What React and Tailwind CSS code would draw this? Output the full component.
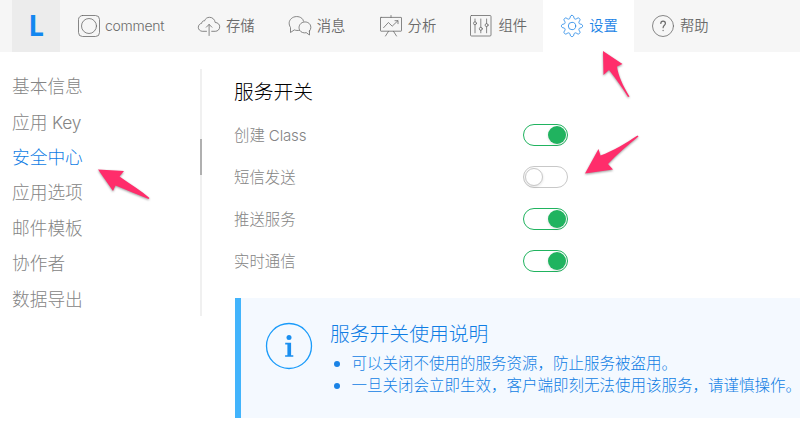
import React from "react";

const stroke = {
  fill: "none",
  stroke: "currentColor",
  strokeWidth: 0.8,
  strokeLinecap: "round",
  strokeLinejoin: "round",
};

function Icon({ children }) {
  return (
    <svg viewBox="0 0 24 24" className="h-6 w-6 shrink-0" {...stroke}>
      {children}
    </svg>
  );
}

// Eight-toothed gear outline around the centre of a 24px box.
const gearPath = (() => {
  const steps = 128;
  const pts = [];
  for (let i = 0; i < steps; i++) {
    const a = (i / steps) * Math.PI * 2;
    const r = 9.1 + 1.6 * Math.tanh(Math.cos(a * 8) * 1.6);
    pts.push((12 + r * Math.sin(a)).toFixed(2) + " " + (12 - r * Math.cos(a)).toFixed(2));
  }
  return "M" + pts.join("L") + "Z";
})();

const tabs = [
  {
    label: "存储",
    icon: (
      <>
        <path d="M9.5 17.3H5.2C3 17.1 1.3 15.500 1.300 13.300c0-2 1.500-3.700 3.400-4C4.800 7.700 6 6.600 7.500 6.900 8.300 4.600 10.200 3.300 12.500 3.300c3 0 5.300 2.200 5.700 5.200 2.600 0 4.500 1.900 4.500 4.300 0 2.500-1.900 4.500-4.400 4.500h-3.600" />
        <path d="M12.100 21.500V10.500M9.300 13.200l2.800-2.800 2.800 2.800" />
      </>
    ),
  },
  {
    label: "消息",
    icon: (
      <>
        <path d="M11.500 16.300c-1.600.4-3.700.2-5.200-.4L2.500 18.500v-5C.5 10.200.7 7 3.300 4.600 6 2 11 1.900 13.800 4.300c.9.8 1.500 1.700 1.700 2.800" />
        <path d="M21.500 17v4l-3.200-2.300c-2.500.5-5.300-.2-6.500-2.300-1.500-2.600-.7-6 2-7.600 2.700-1.600 6.400-.9 8.100 1.500 1.400 2.100 1.300 4.700-.4 6.700z" />
      </>
    ),
  },
  {
    label: "分析",
    icon: (
      <>
        <rect x="1.500" y="3.400" width="21" height="13.800" rx=".5" />
        <path d="M12 1.500v1.900M9.500 17.300l-3 4.700M14.500 17.300l3 4.700M4.600 13.700l4.800-5.200 3.800 3.700 5.700-5.500M16 6.700h3v3" />
      </>
    ),
  },
  {
    label: "组件",
    icon: (
      <>
        <rect x="1.500" y="1.500" width="20.500" height="20.500" rx="1" />
        <path d="M6 5v2.800M6 10.800v8M11.800 5v8.300M11.800 16.300v2.500M17.600 5v4.600M17.600 12.600v6.200" />
        <circle cx="6" cy="9.300" r="1.500" />
        <circle cx="11.800" cy="14.800" r="1.500" />
        <circle cx="17.600" cy="11.100" r="1.500" />
      </>
    ),
  },
  {
    label: "设置",
    active: true,
    icon: (
      <>
        <path d={gearPath} />
        <circle cx="12" cy="12" r="3.700" />
      </>
    ),
  },
  {
    label: "帮助",
    icon: (
      <>
        <circle cx="12" cy="12" r="10.500" />
        <path strokeWidth="1.200" d="M9.800 9.500c0-1.500.9-2.300 2.300-2.300s2.300.8 2.300 2.200c0 1.800-2.300 2-2.300 4.300M12.100 16.300v.3" />
      </>
    ),
  },
];

const menu = ["基本信息", "应用 Key", "安全中心", "应用选项", "邮件模板", "协作者", "数据导出"];

const services = [
  { name: "创建 Class", on: true },
  { name: "短信发送", on: false },
  { name: "推送服务", on: true },
  { name: "实时通信", on: true },
];

// Sets the Latin part of a label in a lighter face.
function Label({ text }) {
  const [cjk, latin] = text.split(" ");
  return (
    <span className="whitespace-pre">
      {cjk}
      {latin && (
        <span className="font-['Inter','Liberation_Sans',sans-serif] text-[0.98em] tracking-[-0.012em]">
          {" " + latin}
        </span>
      )}
    </span>
  );
}

function Toggle({ on }) {
  return (
    <span
      className={
        "flex h-[22px] w-[45px] items-center rounded-full border p-px " +
        (on ? "justify-end border-[#20b35f]" : "justify-start border-[#c8c8c8]")
      }
    >
      <span
        className={
          "h-[18px] w-[18px] rounded-full shadow-[0_1px_3px_rgba(0,0,0,0.12)] " +
          (on ? "bg-[#20b35f]" : "border border-[#c8c8c8] bg-white")
        }
      />
    </span>
  );
}

function Pointer({ className, points }) {
  return (
    <svg viewBox="0 0 60 60" className={"absolute h-[60px] w-[60px] overflow-visible drop-shadow-[0_1px_1px_rgba(0,0,0,0.4)] " + className}>
      <path d={points} fill="#ff2d6b" />
    </svg>
  );
}

export default function App() {
  return (
    <div className="relative h-[427px] w-[800px] overflow-hidden bg-white font-['Liberation_Sans','Noto_Sans_CJK_SC',sans-serif] font-light">
      <nav className="flex h-[52px] bg-[#f6f6f6] pl-3 font-[350] text-[#6a6a6a]">
        <div className="flex w-12 items-center justify-center bg-[#ececec] pb-[3px] font-['Lato','Liberation_Sans',sans-serif] text-[28px] font-black text-[#1387f0]">
          L
        </div>
        <div className="flex w-[120px] items-center gap-[4px] pb-px pl-[17px]">
          <Icon>
            <rect x="1.500" y="1.500" width="21" height="21" rx="4" />
            <circle cx="12" cy="12" r="7.500" />
          </Icon>
          <span className="font-['Inter','Liberation_Sans',sans-serif] text-[14px] font-light tracking-[-0.02em]">comment</span>
        </div>
        {tabs.map((t) => (
          <div
            key={t.label}
            className={
              "flex w-[90.8px] items-center gap-[5px] pb-px pl-[17px] " +
              (t.active ? "bg-white text-[#1a83e6]" : "")
            }
          >
            <Icon>{t.icon}</Icon>
            <span className="pt-[3px] text-[14.3px]">{t.label}</span>
          </div>
        ))}
      </nav>

      <div className="flex">
        <aside className="mt-[17px] flex h-[247px] w-[202px] shrink-0">
          <ul className="flex-1 pl-3 pt-[0.800px]">
            {menu.map((m) => (
              <li
                key={m}
                className={
                  "flex h-[35.4px] items-center text-[17.700px] " +
                  (m === "安全中心" ? "text-[#0f7de4]" : "text-[#848484]")
                }
              >
                <Label text={m} />
              </li>
            ))}
          </ul>
          <div className="w-[2px] bg-[#f0f0f0] pt-[70px]">
            <div className="h-9 bg-[#b0b0b0]" />
          </div>
        </aside>

        <main className="min-w-0 flex-1 pl-8 pt-[22px]">
          <h1 className="h-10 text-[19.800px] leading-[36px] text-black">服务开关</h1>
          <ul>
            {services.map((s) => (
              <li key={s.name} className="flex h-[42px] items-center text-[15.400px] text-[#848484]">
                <span className="w-[289px] pt-px">
                  <Label text={s.name} />
                </span>
                <Toggle on={s.on} />
              </li>
            ))}
          </ul>
          <section className="ml-px mt-[15.500px] flex h-[120.500px] border-l-[6px] border-[#42b4fc] bg-[#f4f9ff] pl-6 text-[#0f7de4]">
            <svg viewBox="0 0 48 48" className="mt-6 h-12 w-12 shrink-0">
              <circle cx="24" cy="24" r="22.500" fill="none" stroke="#1a9bfa" strokeWidth="1.300" />
              <circle cx="24" cy="15.500" r="2.500" fill="#1a8ff0" />
              <path d="M20.200 20.800h5.900v12.400h2.200v1.500h-8.200v-1.500h2.300V22.400h-2.200z" fill="#1a8ff0" />
            </svg>
            <div className="ml-[17px] mt-[22px] whitespace-nowrap">
              <h2 className="text-[19.800px] leading-[28px]">服务开关使用说明</h2>
              <ul className="mt-[5px] text-[15.500px] leading-[22px]">
                {["可以关闭不使用的服务资源，防止服务被盗用。", "一旦关闭会立即生效，客户端即刻无法使用该服务，请谨慎操作。"].map((t) => (
                  <li key={t} className="flex items-center">
                    <span className="ml-[4px] mr-[11.500px] h-[6px] w-[6px] rounded-full bg-[#1a83e6]" />
                    {t}
                  </li>
                ))}
              </ul>
            </div>
          </section>
        </main>
      </div>

      <Pointer className="left-[590px] top-[45px]" points="M13 6L32.500 19l-5.500 2.500C28 30 33 41 39.500 51.500l-1.500.5C32.500 43 26 34 19 25l-5.500 5z" />
      <Pointer className="left-[95px] top-[150px]" points="M3 19.500L29 21l-4.500 5.500C35 34 46 40.500 54.500 48l-1 1C43 45 32 40 20.500 35.500L18 41z" />
      <Pointer className="left-[580px] top-[130px]" points="M5 43.500L18.500 19l2 6.500C33 21 46 13 57.500 5.500l1 1C48 15 37 24 28 34l5 5.500z" />
    </div>
  );
}
